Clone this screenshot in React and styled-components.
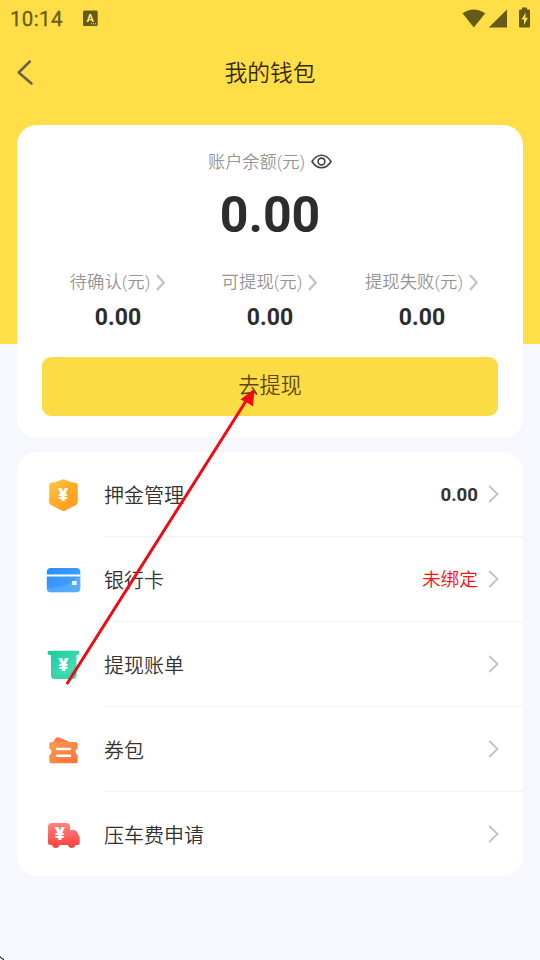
import React from 'react'
import styled, { createGlobalStyle } from 'styled-components'

const GlobalStyle = createGlobalStyle`
  * {
    box-sizing: border-box;
  }

  body {
    margin: 0;
    background: #f6f8fd;
    color: #333;
    font-family: Roboto, 'Noto Sans CJK SC', sans-serif;
  }
`

const Page = styled.div`
  position: relative;
  width: 540px;
  height: 960px;
  overflow: hidden;
  background: linear-gradient(#ffde47 344px, #f6f8fd 344px);
`

const StatusBar = styled.div`
  display: flex;
  align-items: center;
  height: 36px;
  padding: 0 9px 0 10px;
  color: #6a5b18;
`

const Clock = styled.span`
  width: 73px;
  font-size: 20.5px;
  font-weight: 400;
  line-height: 36px;
  letter-spacing: 0.35px;
  padding-top: 2px;
  -webkit-text-stroke: 0.3px #6a5b18;
`

const StatusIcons = styled.div`
  display: flex;
  margin-left: auto;
`

const NavBar = styled.header`
  display: grid;
  grid-template-columns: 50px 1fr 50px;
  align-items: center;
  height: 74px;
  margin-bottom: 15px;
`

const BackButton = styled.button`
  display: flex;
  height: 28px;
  padding: 0 0 0 16px;
  border: 0;
  background: none;
`

const Title = styled.h1`
  margin: 0;
  padding-top: 2px;
  color: #33290e;
  font-size: 22.8px;
  font-weight: 350;
  line-height: 32px;
  text-align: center;
`

const Card = styled.section`
  width: 506px;
  margin: 0 17px 14px;
  border-radius: 20px;
  background: #fff;
`

const BalanceCard = styled(Card)`
  height: 313px;
  padding: 25px 25px 0;
`

const Label = styled.div`
  display: flex;
  align-items: center;
  justify-content: center;
  height: 24px;
  color: #959595;
  font-size: 17.2px;
  font-weight: 350;
  line-height: 24px;
  white-space: nowrap;

  svg {
    margin-left: 6px;
  }
`

const StatLabel = styled(Label)`
  font-size: 17.4px;
  padding-right: 1px;
`

const Amount = styled.div`
  height: 60px;
  margin: 11px 0 25px;
  color: #2d2d2d;
  font-size: 50px;
  font-weight: 700;
  line-height: 60px;
  text-align: center;
`

const Stats = styled.div`
  display: grid;
  grid-template-columns: repeat(3, 152px);
  height: 87px;
`

const StatValue = styled.div`
  color: #2d2d2d;
  font-size: 23px;
  font-weight: 700;
  line-height: 28px;
  text-align: center;
  margin-top: 10px;
`

const WithdrawButton = styled.button`
  display: block;
  width: 456px;
  height: 59px;
  padding: 0 0 6px;
  border: 0;
  border-radius: 9px;
  background: #fcdc45;
  color: #5c4a13;
  font-family: inherit;
  font-size: 21.2px;
  font-weight: 350;
`

const MenuCard = styled(Card)`
  height: 424px;
`

const MenuRow = styled.div`
  display: flex;
  height: 85px;
  padding-left: 29px;

  &:last-child {
    height: 84px;
  }
`

const MenuIcon = styled.svg`
  width: 36px;
  height: 36px;
  margin: 25px 22px 0 0;
  flex: none;
`

const MenuBody = styled.div`
  display: flex;
  flex: 1;
  align-items: center;
  border-bottom: 1px solid #f3f3f4;
  padding: 1px 24px 0 0;

  > svg {
    margin-bottom: 1px;
  }

  ${MenuRow}:last-child & {
    border-bottom: 0;
  }
`

const MenuTitle = styled.span`
  flex: 1;
  padding-top: 2px;
  font-size: 20px;
  font-weight: 350;
  line-height: 30px;
`

const MenuValue = styled.span`
  margin-right: 10px;
  padding-bottom: ${props => (props.$warning ? '4px' : 0)};
  color: ${props => (props.$warning ? '#fe1212' : '#333')};
  font-size: 18.7px;
  font-weight: ${props => (props.$warning ? 350 : 700)};
`

const Pointer = styled.svg`
  position: absolute;
  top: 0;
  left: 0;
  pointer-events: none;
`

const Yen = ({ x, y }) => (
  <text
    x={x}
    y={y}
    fill="#fff"
    stroke="#fff"
    strokeWidth="0.2"
    fontFamily="Roboto, sans-serif"
    fontSize="18"
    fontWeight="900"
    textAnchor="middle"
  >
    ¥
  </text>
)

const Chevron = ({ small }) => (
  <svg width={small ? 9 : 11} height={small ? 17 : 18} fill="none">
    <path
      d={small ? 'M1 1L7.7 8.5L1 16' : 'M1.2 1L9.5 9L1.2 17'}
      stroke="#c4c4c4"
      strokeWidth={small ? 2.2 : 1.9}
    />
  </svg>
)

const gradient = (id, from, to) => (
  <linearGradient id={id} x1="0" y1="0" x2="1" y2="1">
    <stop stopColor={from} />
    <stop offset="1" stopColor={to} />
  </linearGradient>
)

const ShieldIcon = () => (
  <MenuIcon>
    <defs>{gradient('shield', '#ffc43c', '#ff9d20')}</defs>
    <path
      d="M16 2.7Q17.5 2 19 2.7Q24 5.2 30 5.8Q31.7 6 31.7 8V24.5Q31.7 27 29.5 28.2L19 33.7Q17.5 34.5 16 33.7L5.2 28.2Q3.2 27 3.2 24.5V8Q3.2 6 5 5.8Q11 5.2 16 2.7Z"
      fill="url(#shield)"
    />
    <path d="M3.2 20Q14 19 22 6L31.7 8V24.5L29.5 28.2L17.5 34L3.2 26Z" fill="#ff9220" opacity=".2" />
    <Yen x={17.2} y={23.5} />
  </MenuIcon>
)

const BankCardIcon = () => (
  <MenuIcon>
    <defs>{gradient('bank', '#288dfa', '#4ca7ff')}</defs>
    <rect x="0.8" y="6" width="33.5" height="24.3" rx="4" fill="url(#bank)" />
    <path d="M0.8 26Q22 26 31 15H34.3V26Q34.3 30.3 30 30.3H5Q0.8 30.3 0.8 26Z" fill="#79c1ff" opacity=".35" />
    <path d="M0.8 13.5H34.3" stroke="#fff" strokeWidth="1.9" />
    <rect x="26.2" y="19" width="4.4" height="4" fill="#fff" />
  </MenuIcon>
)

const BillIcon = () => (
  <MenuIcon>
    <defs>{gradient('bill', '#14cf9c', '#5adfc0')}</defs>
    <path
      d="M3.5 3.8H31.5Q33.5 3.8 33.5 5.8Q33.5 7.8 31.5 8H30.5V27.5Q30.5 32 26 32H9.5Q5 32 5 27.5V8H3.5Q1.5 7.8 1.5 5.8Q1.5 3.8 3.5 3.8Z"
      fill="url(#bill)"
    />
    <path d="M5 28.5Q17 29.5 30.5 22V27.5Q30.5 32 26 32H9.5Q5 32 5 28.5Z" fill="#15d1a1" opacity=".4" />
    <Yen x={17.3} y={23.5} />
  </MenuIcon>
)

const CouponIcon = () => (
  <MenuIcon>
    <defs>{gradient('coupon', '#ff9b4b', '#fa713d')}</defs>
    <path d="M6.5 11L9.5 6.5Q10.8 4.6 13 5.4L21.5 9L24 11Z" fill="#f97b43" />
    <path
      d="M5.5 10H29.5Q31.7 10 31.7 12.2V16.5Q29.5 17.3 29.5 19.7Q29.5 22.2 31.7 23V29Q31.7 31.2 29.5 31.2H5.5Q3.3 31.2 3.3 29V23Q5.5 22.2 5.5 19.7Q5.5 17.3 3.3 16.5V12.2Q3.3 10 5.5 10Z"
      fill="url(#coupon)"
    />
    <path d="M11 17H24M11 23.8H24" stroke="#fff" strokeWidth="2.5" strokeLinecap="round" />
  </MenuIcon>
)

const TruckIcon = () => (
  <MenuIcon>
    <defs>
      <linearGradient id="truck" x1="0" y1="0" x2="0" y2="1">
        <stop stopColor="#ff8580" />
        <stop offset="1" stopColor="#f93e3d" />
      </linearGradient>
    </defs>
    <path
      d="M6 6H20.5Q24 6 24 9.5V13H28Q30 13 31 14.8L33.2 19.2Q33.7 20.2 33.7 21.5V26.2Q33.7 28 32 28H29.5Q28.7 31 25.7 31Q22.7 31 22 28H13.5Q12.7 31 9.7 31Q6.8 31 6 28H4.5Q2 28 2 25.5V10Q2 6 6 6Z"
      fill="url(#truck)"
    />
    <Yen x={13.8} y={22.5} />
  </MenuIcon>
)

const stats = [
  { label: '待确认(元)', value: '0.00' },
  { label: '可提现(元)', value: '0.00' },
  { label: '提现失败(元)', value: '0.00' },
]

const menu = [
  { title: '押金管理', icon: ShieldIcon, value: '0.00' },
  { title: '银行卡', icon: BankCardIcon, value: '未绑定', warning: true },
  { title: '提现账单', icon: BillIcon },
  { title: '券包', icon: CouponIcon },
  { title: '压车费申请', icon: TruckIcon },
]

const App = () => (
  <Page>
    <GlobalStyle />
    <StatusBar>
      <Clock>10:14</Clock>
      <svg width="15" height="16">
        <rect y="0.5" width="14.7" height="15.5" rx="1.5" fill="#665a18" />
        <text x="7.3" y="12" fill="#ffe873" fontSize="11" fontWeight="700" textAnchor="middle">
          A
        </text>
        <path d="M8 13.8H14" stroke="#ffe873" strokeWidth="1" strokeDasharray="1 1" />
      </svg>
      <StatusIcons>
        <svg width="69" height="22" fill="#665a18">
          <path d="M0.5 6.3Q11.5 -1.5 23.3 6.3L11.8 20.5Z" />
          <path d="M45 2.5V20.5H26.8Z" />
          <path d="M58.4 2.5H60V0.5H65V2.5H67Q68 2.5 68 3.7V19.3Q68 20.5 67 20.5H58.4Q57 20.5 57 19.3V3.7Q57 2.5 58.4 2.5Z" />
          <path d="M63.7 5.5L59.5 12.5H62V18L65.9 10.8H63.3Z" fill="#ffe255" />
        </svg>
      </StatusIcons>
    </StatusBar>

    <NavBar>
      <BackButton aria-label="返回">
        <svg width="18" height="28" fill="none">
          <path
            d="M13.8 2.5L2.7 13.5L15.5 24.5"
            stroke="#6a6149"
            strokeWidth="2.5"
            strokeLinecap="round"
            strokeLinejoin="round"
          />
        </svg>
      </BackButton>
      <Title>我的钱包</Title>
    </NavBar>

    <BalanceCard>
      <Label>
        账户余额(元)
        <svg width="21" height="16" fill="none" stroke="#404040" strokeWidth="1.6">
          <path d="M1 7.5Q5 1.2 10.5 1.2T20 7.5Q16 13.8 10.5 13.8T1 7.5Z" />
          <circle cx="10.5" cy="7.5" r="3.4" />
        </svg>
      </Label>
      <Amount>0.00</Amount>
      <Stats>
        {stats.map(stat => (
          <div key={stat.label}>
            <StatLabel>
              {stat.label}
              <Chevron small />
            </StatLabel>
            <StatValue>{stat.value}</StatValue>
          </div>
        ))}
      </Stats>
      <WithdrawButton>去提现</WithdrawButton>
    </BalanceCard>

    <MenuCard>
      {menu.map(({ title, icon: Icon, value, warning }) => (
        <MenuRow key={title}>
          <Icon />
          <MenuBody>
            <MenuTitle>{title}</MenuTitle>
            {value && <MenuValue $warning={warning}>{value}</MenuValue>}
            <Chevron />
          </MenuBody>
        </MenuRow>
      ))}
    </MenuCard>

    <Pointer width="540" height="960">
      <path d="M67.5 683L246 401" stroke="#f20a12" strokeWidth="3" strokeLinecap="round" />
      <path d="M254.5 388.5L253 406.5L247 402.5L240.5 399.5Z" fill="#f20a12" />
      <path d="M0 956.5H1V957.5H2V958.5H4V960H2.5V959H1V958H0Z" fill="#222" />
    </Pointer>
  </Page>
)

export default App
